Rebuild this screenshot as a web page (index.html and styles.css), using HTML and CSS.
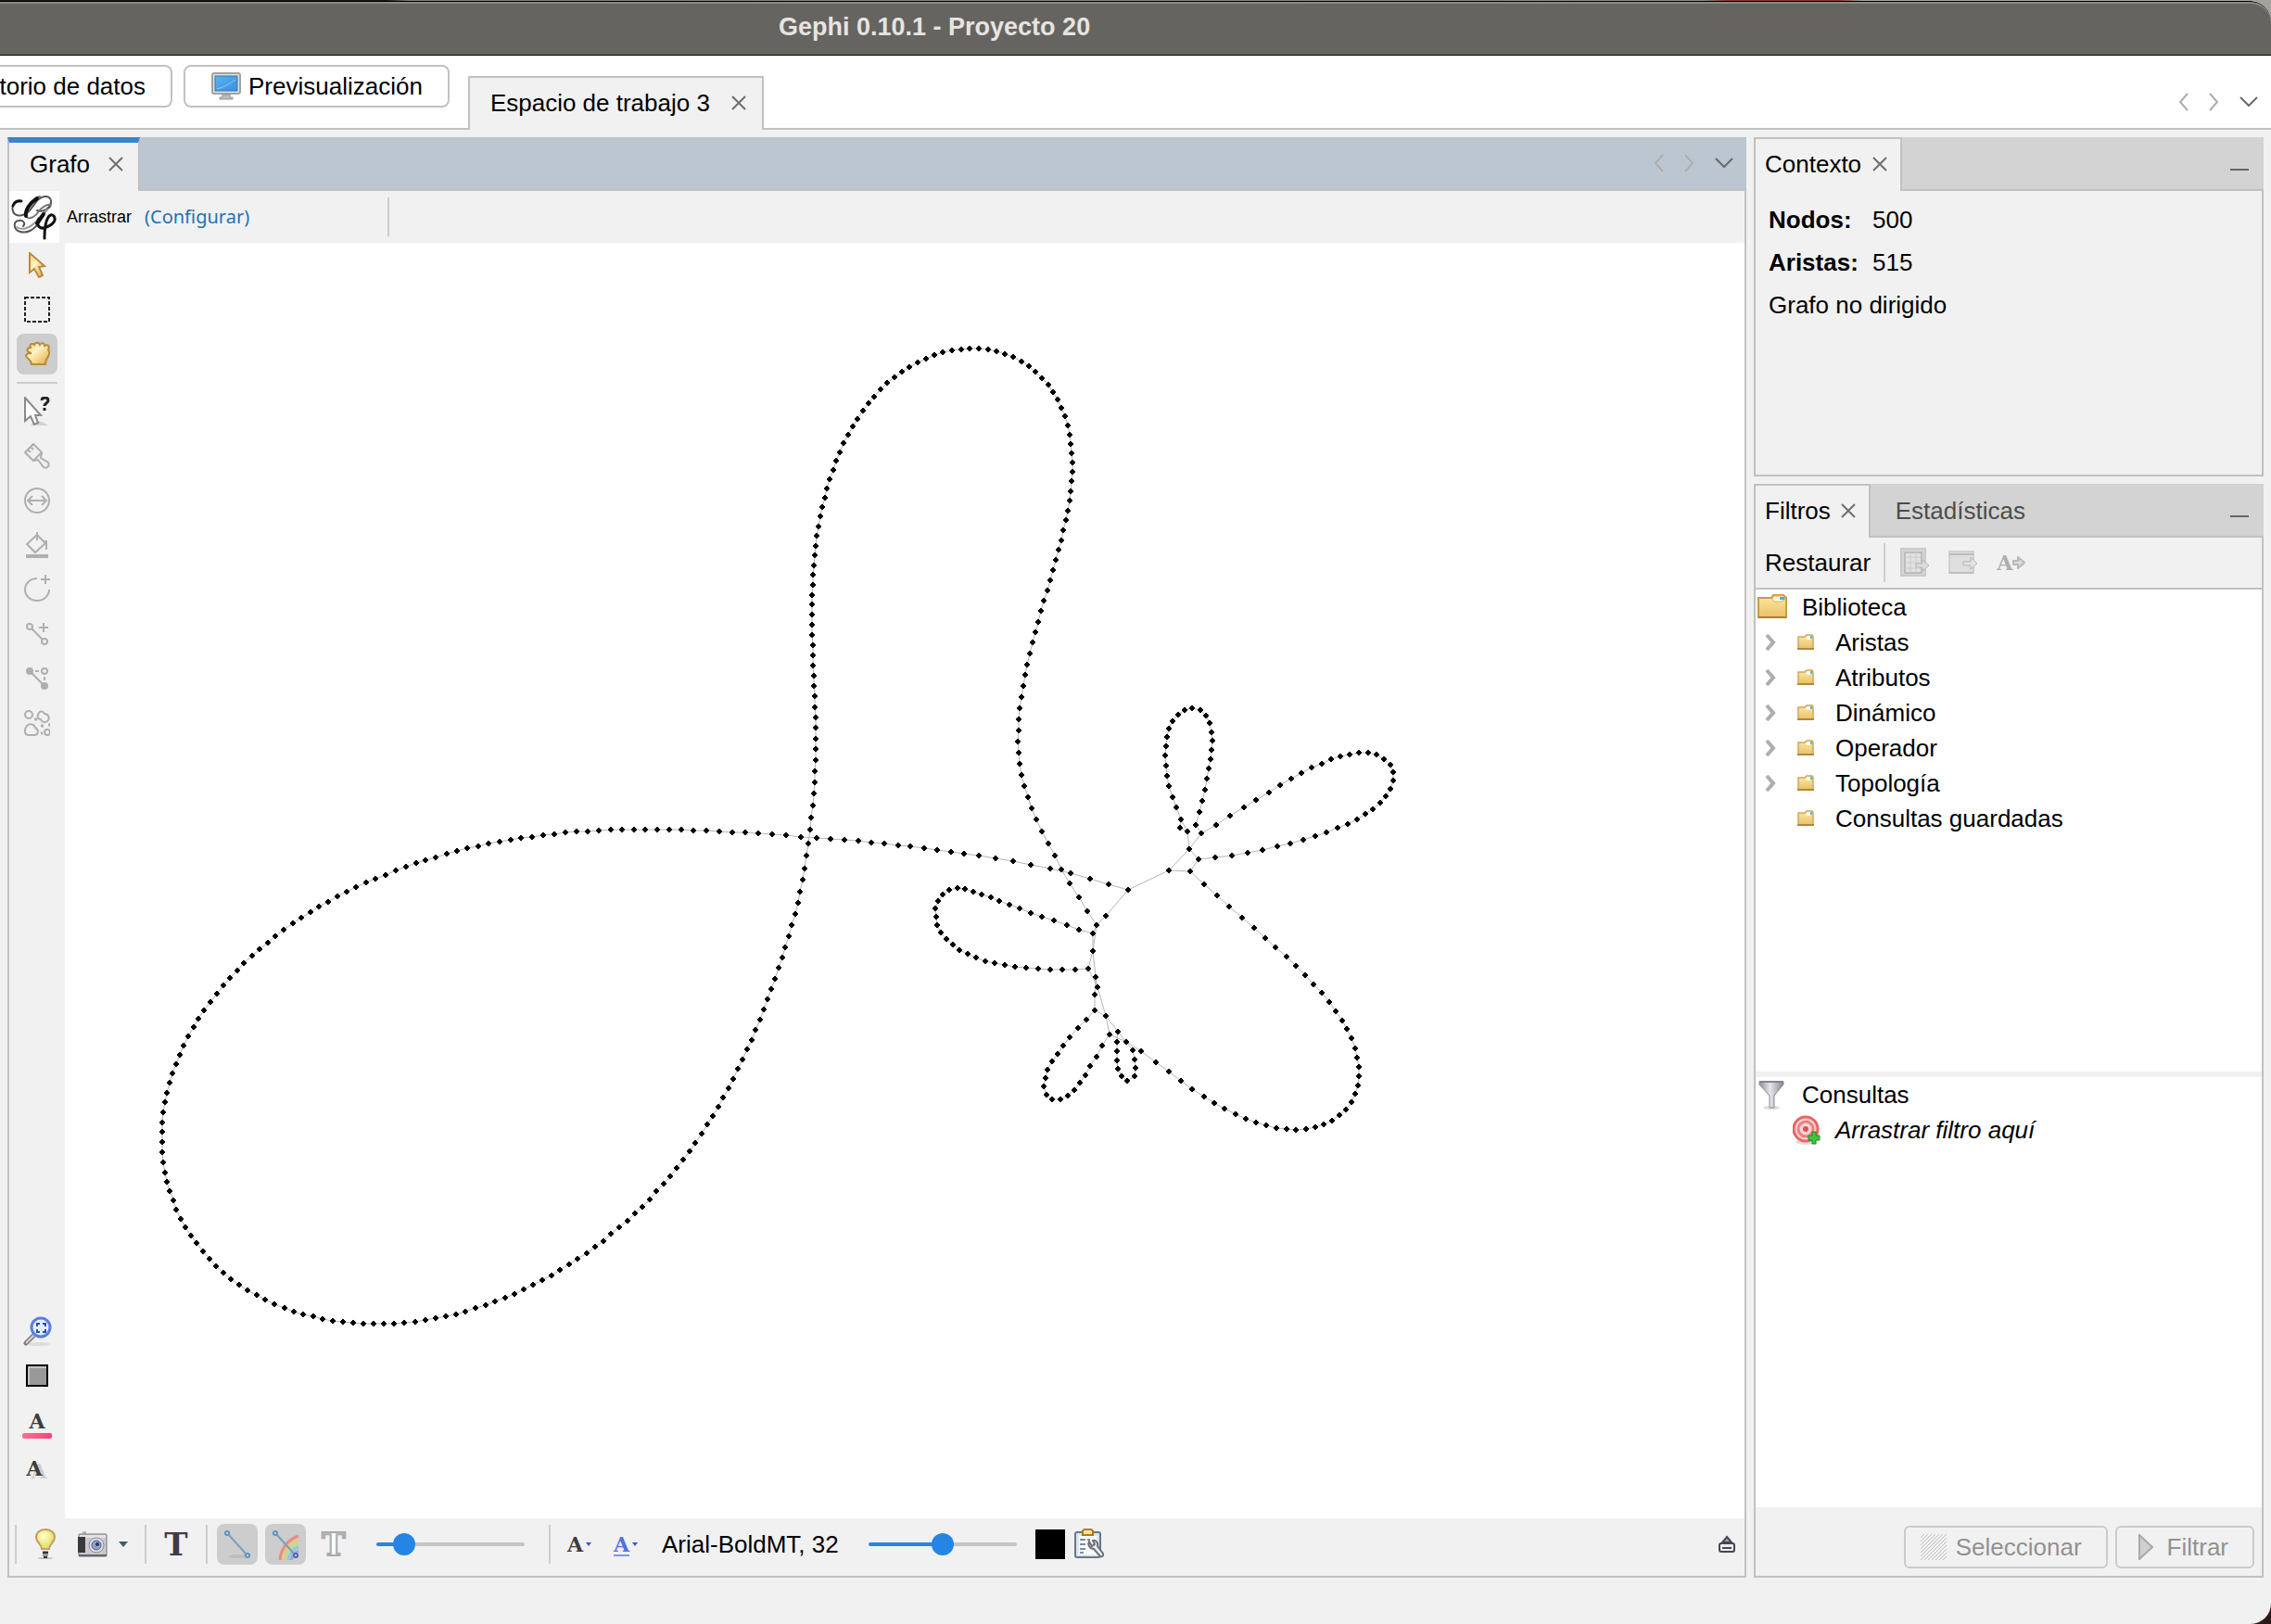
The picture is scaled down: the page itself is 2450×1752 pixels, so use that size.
FILE: index.html
```html
<!DOCTYPE html>
<html lang="es">
<head>
<meta charset="utf-8">
<title>Gephi 0.10.1 - Proyecto 20</title>
<link rel="stylesheet" href="styles.css">
</head>
<body>
<svg class="defs" aria-hidden="true">
  <defs>
    <linearGradient id="gold" x1="0" y1="0" x2="1" y2="1"><stop offset="0" stop-color="#f3d27a"/><stop offset="0.4" stop-color="#fff3c4"/><stop offset="1" stop-color="#e0a93c"/></linearGradient>
    <linearGradient id="folder" x1="0" y1="0" x2="0" y2="1"><stop offset="0" stop-color="#fdeaa5"/><stop offset="1" stop-color="#e9c069"/></linearGradient>
    <linearGradient id="screen" x1="0" y1="0" x2="1" y2="1"><stop offset="0" stop-color="#5cb3ee"/><stop offset="1" stop-color="#3a8ede"/></linearGradient>
    <linearGradient id="metal" x1="0" y1="0" x2="1" y2="0"><stop offset="0" stop-color="#8d8d96"/><stop offset="0.45" stop-color="#e6e6ec"/><stop offset="1" stop-color="#84848e"/></linearGradient>
    <radialGradient id="glow" cx="0.4" cy="0.35" r="0.7"><stop offset="0" stop-color="#ffffd0"/><stop offset="1" stop-color="#dcdc4e"/></radialGradient>
    <pattern id="hatch" width="4" height="4" patternUnits="userSpaceOnUse"><path d="M-1 5L5 -1M-1 1L1 -1M3 5L5 3" stroke="#c0c0c0" stroke-width="1"/></pattern>
    <symbol id="close" viewBox="0 0 16 16"><path d="M1 1L15 15M15 1L1 15" fill="none" stroke="#6e6e6e" stroke-width="2"/></symbol>
    <symbol id="prev" viewBox="0 0 12 20"><path d="M10 1L2 10L10 19" fill="none" stroke="#adadad" stroke-width="2"/></symbol>
    <symbol id="next" viewBox="0 0 12 20"><path d="M2 1L10 10L2 19" fill="none" stroke="#adadad" stroke-width="2"/></symbol>
    <symbol id="down" viewBox="0 0 20 12"><path d="M1 1L10 10L19 1" fill="none" stroke="#6a6a6a" stroke-width="2"/></symbol>
    <symbol id="twist" viewBox="0 0 12 18"><path d="M2 1L9 9L2 17" fill="none" stroke="#aeaeae" stroke-width="4"/></symbol>
    <symbol id="dir" viewBox="0 0 32 28">
      <path d="M1 4h14l2-3h11l3 3v21H1z" fill="url(#folder)" stroke="#c99b4a" stroke-width="2"/>
      <path d="M16 5l2-3h10l2 3-4 3h-8z" fill="#fff8e0" stroke="#dcb768"/><path d="M24 3h5v3h-5z" fill="#35b8ea"/>
      <path d="M1 25h30" stroke="#ab7f33" stroke-width="2"/>
    </symbol>
    <symbol id="dir-s" viewBox="0 0 20 18">
      <path d="M2 3h7l2-2h6l1 2v13H2z" fill="url(#folder)" stroke="#d1a659" stroke-width="1.5"/>
      <path d="M10 4l2-2h5v2l-2 2h-4z" fill="#fff8e0"/><path d="M15 2h2v3h-2z" fill="#4cbfe8"/>
      <path d="M1 16h18" stroke="#b48638" stroke-width="2"/>
    </symbol>
  </defs>
</svg>

<div class="window">
  <header class="titlebar"><h1 class="titlebar-text">Gephi 0.10.1 - Proyecto 20</h1></header>

  <nav class="mainbar" aria-label="Vistas">
    <button class="view-btn view-btn-cut" type="button">Laboratorio de datos</button>
    <button class="view-btn" type="button">
      <svg width="32" height="30" viewBox="0 0 32 30"><rect x="1" y="1" width="30" height="22" rx="2" fill="#e2e2dd" stroke="#a3a39c" stroke-width="2"/><rect x="4" y="4" width="24" height="16" fill="url(#screen)" stroke="#2b74c4"/><path d="M6 18C14 16 20 12 26 8" stroke="#87caf5" fill="none"/><path d="M12 24h8v3h3v2H9v-2h3z" fill="#bdbdb8" stroke="#989890"/></svg>
      Previsualización
    </button>
    <div class="work-tab"><span>Espacio de trabajo 3</span><button class="icon-btn" type="button" aria-label="Cerrar"><svg width="18" height="16"><use href="#close"/></svg></button></div>
    <div class="scrollers">
      <button class="icon-btn" type="button" aria-label="Anterior"><svg width="12" height="20"><use href="#prev"/></svg></button>
      <button class="icon-btn" type="button" aria-label="Siguiente"><svg width="12" height="20"><use href="#next"/></svg></button>
      <button class="icon-btn" type="button" aria-label="Lista"><svg width="20" height="12"><use href="#down"/></svg></button>
    </div>
  </nav>

  <main class="work">
    <section class="panel graph">
      <div class="strip strip-active">
        <div class="tab tab-active"><span>Grafo</span><button class="icon-btn" type="button" aria-label="Cerrar"><svg width="16" height="16"><use href="#close"/></svg></button></div>
        <div class="scrollers scrollers-graph">
          <button class="icon-btn" type="button" aria-label="Anterior"><svg width="12" height="20"><use href="#prev"/></svg></button>
          <button class="icon-btn" type="button" aria-label="Siguiente"><svg width="12" height="20"><use href="#next"/></svg></button>
          <button class="icon-btn" type="button" aria-label="Lista"><svg width="20" height="12"><use href="#down"/></svg></button>
        </div>
      </div>

      <div class="props">
        <svg class="logo" width="54" height="56" viewBox="0 0 54 56" fill="none" stroke-linecap="round">
          <path d="M13 11C6 10 2 16 4 22C7 29 16 27 21 22C27 16 30 7 38 6C45 5 47 12 43 17C40 21 34 23 30 21" stroke="#555" stroke-width="2"/>
          <path d="M13 11C9 10 5 12 4 16" stroke="#111" stroke-width="3"/>
          <path d="M33 6C25 8 17 19 18 26C19 32 27 29 31 23C35 18 40 14 45 15" stroke="#777" stroke-width="2"/>
          <path d="M30 8C22 13 17 21 18 27" stroke="#111" stroke-width="4"/>
          <path d="M44 17C39 20 36 28 32 34C27 42 19 46 12 44C4 42 4 33 10 32C15 31 18 35 15 38" stroke="#555" stroke-width="2"/>
          <path d="M8 39C14 43 22 40 28 34C32 29 36 24 41 20" stroke="#999" stroke-width="2"/>
          <path d="M37 25L30 35" stroke="#111" stroke-width="4"/>
          <path d="M32 30C28 38 34 42 40 39C48 36 51 31 48 27C44 23 38 29 38 51" stroke="#111" stroke-width="3"/>
        </svg>
        <span class="props-mode">Arrastrar</span>
        <a class="props-link" href="#configurar">(Configurar)</a>
        <span class="vsep props-sep"></span>
      </div>

      <div class="stage">
        <div class="tools">
          <button class="tool" type="button" aria-label="Seleccionar"><svg width="28" height="28" viewBox="0 0 28 28"><path d="M6 1V22L11 18L16 27L20 25L16 16L22 15Z" fill="url(#gold)" stroke="#b98a41" stroke-width="2"/></svg></button>
          <button class="tool" type="button" aria-label="Rectángulo"><svg width="28" height="28" viewBox="0 0 28 28"><rect x="1" y="1" width="26" height="26" fill="none" stroke="#222" stroke-width="2" stroke-dasharray="4 2"/></svg></button>
          <button class="tool tool-on" type="button" aria-label="Arrastrar"><svg width="28" height="28" viewBox="0 0 28 28"><path d="M8 25C8 20 3 19 2 16C2 13 5 13 8 13C2 12 2 7 7 7C5 3 9 2 11 4C12 1 16 1 17 4C19 1 22 2 22 5C26 3 28 6 26 9C28 12 27 16 25 18C24 20 23 22 23 25Z" fill="url(#gold)" stroke="#b98a3c" stroke-width="2"/></svg></button>
          <span class="hsep"></span>
          <button class="tool" type="button" aria-label="Información"><svg width="28" height="32" viewBox="0 0 28 32"><path d="M7 31C12 24 20 26 26 31Z" fill="#d2d2d2"/><path d="M1 1V26L7 21L11 30L15 28L12 20H18Z" fill="#fff" stroke="#8a8a8a" stroke-width="2"/><path d="M19 4C19 0 26 0 26 4C26 7 22 7 22 10M22 12V15" fill="none" stroke="#222" stroke-width="3"/></svg></button>
          <button class="tool" type="button" aria-label="Pintor"><svg class="line" width="28" height="28" viewBox="0 0 28 28"><path d="M1 10L10 1L19 10L10 19ZM4 7L7 10M7 4L10 7M10 19L15 18L21 26C24 28 28 25 26 21L18 16L19 10"/></svg></button>
          <button class="tool" type="button" aria-label="Tamaño"><svg class="line" width="28" height="28" viewBox="0 0 28 28"><circle cx="14" cy="14" r="13"/><path d="M4 14H24M9 9L4 14L9 19M19 9L24 14L19 19"/></svg></button>
          <button class="tool" type="button" aria-label="Brocha"><svg class="line" width="28" height="28" viewBox="0 0 28 28"><path d="M14 0V9M14 3L23 12L12 22L3 13ZM20 10H24V19"/><path d="M2 26H26" stroke-width="4"/></svg></button>
          <button class="tool" type="button" aria-label="Nodo"><svg class="line" width="28" height="32" viewBox="0 0 28 32"><path d="M14 4A13 12 0 1 0 27 16M23 0V10M18 5H28"/></svg></button>
          <button class="tool" type="button" aria-label="Arista"><svg class="line" width="28" height="26" viewBox="0 0 28 26"><circle cx="6" cy="5" r="3"/><circle cx="22" cy="21" r="3"/><path d="M8 7L20 19M21 1V11M16 6H26"/></svg></button>
          <button class="tool" type="button" aria-label="Camino más corto"><svg class="line" width="28" height="26" viewBox="0 0 28 26"><circle cx="6" cy="5" r="3" fill="#afafaf"/><circle cx="22" cy="21" r="3" fill="#afafaf"/><circle cx="22" cy="5" r="3"/><path d="M8 7L20 19M12 5H16M22 11V15"/></svg></button>
          <button class="tool" type="button" aria-label="Mapa de calor"><svg class="line" width="28" height="28" viewBox="0 0 28 28"><circle cx="5" cy="5" r="4"/><path d="M16 3C18 0 21 2 22 4C27 4 28 10 25 12C22 14 19 13 18 10C14 10 14 6 16 3ZM3 17C6 14 11 15 12 19C16 21 16 27 11 27H4C0 26 0 21 3 17Z"/><circle cx="25" cy="24" r="3"/><path d="M11 10H14M18 17H21M18 25H20M26 16H28" stroke-width="3"/></svg></button>
          <div class="tools-end">
            <button class="tool" type="button" aria-label="Centrar"><svg width="32" height="32" viewBox="0 0 32 32"><ellipse cx="18" cy="30" rx="12" ry="2" fill="#ddd"/><path d="M14 19L4 29" stroke="#7d7d80" stroke-width="5" stroke-linecap="round"/><path d="M13 20L4 29" stroke="#d4d4d8" stroke-width="2"/><circle cx="20" cy="12" r="10" fill="#e5eeff" stroke="#5a7fe0" stroke-width="3"/><path d="M16 11V8H19M22 8H25V11M25 14V17H22M19 17H16V14" fill="none" stroke="#2b4da8" stroke-width="2"/></svg></button>
            <button class="tool" type="button" aria-label="Color de fondo"><svg width="24" height="24" viewBox="0 0 24 24"><rect x="1" y="1" width="22" height="22" fill="#999" stroke="#000" stroke-width="2"/><path d="M3 22V3H22" fill="none" stroke="#eee"/></svg></button>
            <button class="tool tool-label" type="button" aria-label="Color de etiqueta"><span class="glyph">A</span><span class="underline"></span></button>
            <button class="tool tool-shadow" type="button" aria-label="Visibilidad de etiquetas"><span class="glyph glyph-shade">A</span></button>
          </div>
        </div>
        <svg class="canvas" id="graph" viewBox="70 262 1812 1376" preserveAspectRatio="xMinYMin meet" role="img" aria-label="Grafo"></svg>
      </div>

      <div class="botbar">
        <span class="vsep"></span>
        <button class="bot bot-bulb" type="button" aria-label="Luz"><svg width="22" height="34" viewBox="0 0 22 34"><ellipse cx="11" cy="32" rx="8" ry="1" fill="#bbb"/><path d="M7 22C7 17 1 15 1 9C1 4 6 1 11 1C16 1 21 4 21 9C21 15 15 17 15 22Z" fill="url(#glow)" stroke="#c99c63" stroke-width="2"/><path d="M8 24H14V30H8Z" fill="#999"/><path d="M8 26H14M9 31H13" stroke="#333" stroke-width="2"/></svg></button>
        <button class="bot bot-cam" type="button" aria-label="Captura">
          <svg width="32" height="28" viewBox="0 0 32 28"><path d="M5 0H9V4H5Z" fill="#bbb"/><rect x="1" y="3" width="30" height="24" rx="1" fill="#c9c9d0" stroke="#77777d"/><path d="M2 4H30V7H2Z" fill="#e4e4e6"/><rect x="0" y="6" width="8" height="17" fill="#38383d"/><circle cx="20" cy="15" r="8" fill="#dedee4" stroke="#8c8c94"/><circle cx="20" cy="15" r="5" fill="#8ea2d8" stroke="#5a5d68"/><circle cx="21" cy="14" r="2" fill="#24366f"/><path d="M1 26H31" stroke="#666" stroke-width="2"/></svg>
          <svg width="10" height="8" viewBox="0 0 10 8"><path d="M0 1H10L5 7Z" fill="#4a5866"/></svg>
        </button>
        <span class="vsep"></span>
        <button class="bot bot-t" type="button" aria-label="Etiquetas de nodo"><span class="tee">T</span></button>
        <span class="vsep"></span>
        <div class="toggles">
          <button class="bot toggle" type="button" aria-label="Mostrar aristas"><svg width="32" height="36" viewBox="0 0 32 36"><ellipse cx="17" cy="31" rx="11" ry="2" fill="#bdbdbd"/><path d="M6 7L25 28" stroke="#7b9dbd" stroke-width="2"/><circle cx="5" cy="6" r="2" fill="#dbe9f5" stroke="#5e92c0" stroke-width="2"/><circle cx="27" cy="30" r="2" fill="#dbe9f5" stroke="#5e92c0" stroke-width="2"/></svg></button>
          <button class="bot toggle" type="button" aria-label="Color de aristas"><svg width="32" height="36" viewBox="0 0 32 36"><g fill="none" stroke-width="3" opacity=".75"><path d="M10 35C11 23 18 13 30 9" stroke="#ee7777"/><path d="M13 35C14 25 20 17 30 13" stroke="#f3c66e"/><path d="M16 35C17 27 22 20 30 17" stroke="#b5e08a"/><path d="M19 35C20 29 24 23 30 21" stroke="#77c9e0"/><path d="M22 35C23 31 26 27 30 25" stroke="#a58fd4"/></g><path d="M6 7L25 28" stroke="#7b9dbd" stroke-width="2"/><circle cx="5" cy="6" r="2" fill="#dbe9f5" stroke="#5e92c0" stroke-width="2"/><circle cx="27" cy="30" r="2" fill="#dbe9f5" stroke="#4c62b5" stroke-width="2"/></svg></button>
          <button class="bot bot-t2" type="button" aria-label="Etiquetas de arista"><span class="tee tee-off">T</span></button>
        </div>
        <input class="slider slider-edge" type="range" min="0" max="100" value="13" style="--fill:19%" aria-label="Grosor de aristas">
        <span class="vsep"></span>
        <button class="bot bot-a" type="button" aria-label="Modo de tamaño"><span class="glyph">A</span><svg width="6" height="4" viewBox="0 0 6 4"><path d="M0 0H6L3 4Z" fill="#3c55c4"/></svg></button>
        <button class="bot bot-a" type="button" aria-label="Modo de color"><span class="glyph glyph-blue">A</span><svg width="6" height="4" viewBox="0 0 6 4"><path d="M0 0H6L3 4Z" fill="#3c55c4"/></svg></button>
        <button class="bot bot-font" type="button">Arial-BoldMT, 32</button>
        <input class="slider slider-font" type="range" min="0" max="100" value="50" style="--fill:50%" aria-label="Tamaño de fuente">
        <button class="bot swatch" type="button" aria-label="Color de texto"></button>
        <button class="bot" type="button" aria-label="Atributos"><svg width="32" height="34" viewBox="0 0 32 34"><rect x="1" y="4" width="27" height="27" rx="2" fill="#dfe6ee" stroke="#66788a" stroke-width="2"/><path d="M5 8H24V28H5Z" fill="#fbfcfd"/><path d="M6 12H12M14 12H17M6 17H12M6 22H12M6 26H10" stroke="#7d8ea0" stroke-width="2"/><path d="M9 7V3C9 0 20 0 20 3V7Z" fill="#f8e2b0" stroke="#b0770f" stroke-width="2"/><path d="M16 14C14 18 17 22 21 22L28 30C30 31 32 29 31 27L25 19C26 15 23 12 20 13L22 17L19 19Z" fill="#eceff3" stroke="#6b7078" stroke-width="2"/></svg></button>
        <button class="bot eject" type="button" aria-label="Expandir"><svg width="18" height="20" viewBox="0 0 18 20"><path d="M9 2L14 8H4Z" fill="#9fa2a8" stroke="#44474e" stroke-width="2"/><rect x="1" y="9" width="16" height="9" rx="2" fill="#eee" stroke="#44474e" stroke-width="2"/><path d="M4 14H14" stroke="#44474e" stroke-width="2"/></svg></button>
      </div>
    </section>

    <aside class="side">
      <section class="panel context">
        <div class="strip">
          <div class="tab"><span>Contexto</span><button class="icon-btn" type="button" aria-label="Cerrar"><svg width="16" height="16"><use href="#close"/></svg></button></div>
          <button class="icon-btn minimize" type="button" aria-label="Minimizar"></button>
        </div>
        <dl class="stats">
          <dt>Nodos:</dt><dd>500</dd>
          <dt>Aristas:</dt><dd>515</dd>
        </dl>
        <p class="kind">Grafo no dirigido</p>
      </section>

      <section class="panel filters">
        <div class="strip">
          <div class="tab tab-short"><span>Filtros</span><button class="icon-btn" type="button" aria-label="Cerrar"><svg width="16" height="16"><use href="#close"/></svg></button></div>
          <button class="tab-idle" type="button">Estadísticas</button>
          <button class="icon-btn minimize" type="button" aria-label="Minimizar"></button>
        </div>
        <div class="filterbar">
          <button class="reset" type="button">Restaurar</button>
          <span class="vsep"></span>
          <button class="icon-btn" type="button" disabled aria-label="Exportar columna"><svg width="32" height="32" viewBox="0 0 32 32"><rect x="1" y="1" width="26" height="29" fill="#d6d6d6" stroke="#cacaca" stroke-width="2"/><path d="M5 5H23V27H5Z" fill="#e2e2e2" stroke="#bcbcbc" stroke-width="2"/><path d="M11 5V27M17 5V27M5 10H23M5 16H23M5 22H23" stroke="#cacaca" stroke-width="1"/><path d="M17 17H24V13L31 19L24 25V21H17Z" fill="#ddd" stroke="#b9b9b9"/></svg></button>
          <button class="icon-btn" type="button" disabled aria-label="Exportar espacio"><svg width="32" height="32" viewBox="0 0 32 32"><rect x="1" y="4" width="26" height="23" fill="#dedede" stroke="#d0d0d0" stroke-width="2"/><path d="M1 7H27M1 27H27" stroke="#bebebe" stroke-width="2"/><path d="M16 15H24V10L31 17L24 23V19H16Z" fill="#e3e3e3" stroke="#b6b6b6"/></svg></button>
          <button class="icon-btn export-label" type="button" disabled aria-label="Exportar etiquetas"><span class="glyph glyph-off">A</span><svg width="14" height="14" viewBox="0 0 14 14"><path d="M1 5H6V1L13 7L6 13V9H1Z" fill="#ddd" stroke="#b9b9b9" stroke-width="2"/></svg></button>
        </div>
        <div class="tree tree-library">
          <div class="row row-root"><svg width="32" height="28"><use href="#dir"/></svg>Biblioteca</div>
          <ul class="list">
            <li class="row"><svg class="twist" width="12" height="18"><use href="#twist"/></svg><svg width="20" height="18"><use href="#dir-s"/></svg>Aristas</li>
            <li class="row"><svg class="twist" width="12" height="18"><use href="#twist"/></svg><svg width="20" height="18"><use href="#dir-s"/></svg>Atributos</li>
            <li class="row"><svg class="twist" width="12" height="18"><use href="#twist"/></svg><svg width="20" height="18"><use href="#dir-s"/></svg>Dinámico</li>
            <li class="row"><svg class="twist" width="12" height="18"><use href="#twist"/></svg><svg width="20" height="18"><use href="#dir-s"/></svg>Operador</li>
            <li class="row"><svg class="twist" width="12" height="18"><use href="#twist"/></svg><svg width="20" height="18"><use href="#dir-s"/></svg>Topología</li>
            <li class="row"><span class="twist"></span><svg width="20" height="18"><use href="#dir-s"/></svg>Consultas guardadas</li>
          </ul>
        </div>
        <div class="tree tree-queries">
          <div class="row row-root"><svg width="32" height="32" viewBox="0 0 32 32"><ellipse cx="15" cy="30" rx="9" ry="2" fill="#ddd"/><path d="M2 2H28V5L18 17V30H13V17L2 5Z" fill="url(#metal)" stroke="#8c8c95"/><path d="M2 2H28" stroke="#85858e" stroke-width="2"/></svg>Consultas</div>
          <div class="row row-drop"><svg width="32" height="32" viewBox="0 0 32 32"><ellipse cx="14" cy="29" rx="11" ry="3" fill="#ddd"/><circle cx="14" cy="15" r="13" fill="#f9d5d5" stroke="#e86464" stroke-width="3"/><circle cx="14" cy="15" r="8" fill="none" stroke="#ee7f7f" stroke-width="3"/><circle cx="14" cy="15" r="3" fill="#e35050"/><path d="M21 18H25V22H29V27H25V31H21V27H17V22H21Z" fill="#3cc83c" stroke="#1d8a26"/></svg><em>Arrastrar filtro aquí</em></div>
        </div>
        <div class="actions">
          <button class="act act-select" type="button" disabled><svg width="28" height="28" viewBox="0 0 28 28"><rect width="28" height="28" fill="url(#hatch)"/></svg>Seleccionar</button>
          <button class="act act-run" type="button" disabled><svg width="18" height="28" viewBox="0 0 18 28"><path d="M2 1L16 14L2 27Z" fill="#cfcfcf" stroke="#a9a9a9" stroke-width="2"/></svg>Filtrar</button>
        </div>
      </section>
    </aside>
  </main>
</div>
<script src="graph.js"></script>
</body>
</html>
```
FILE: styles.css
```css
* { box-sizing: border-box; }

body {
  margin: 0;
  min-height: 100vh;
  display: flex;
  flex-direction: column;
  padding-top: 1px;
  background: linear-gradient(90deg, #1a1710 17%, #7d7d76 18%, #8a8a84 75%, #8a3a2c 76%, #8a3a2c 81%, #a3a39c 82%) top / 100% 40px no-repeat, #2a1a18;
  font: 26px/30px "Liberation Sans", Arial, sans-serif;
  color: #000;
}

button {
  font: inherit;
  color: inherit;
  margin: 0;
  padding: 0;
  border: 0;
  background: none;
}

svg { display: block; flex: none; }
h1, p, dl, dd, ul { margin: 0; padding: 0; }

.defs { position: absolute; width: 0; height: 0; }

.window {
  flex: 1;
  display: flex;
  flex-direction: column;
  overflow: hidden;
  border-radius: 0 22px 22px 0;
  background: #f1f1f1;
}

.titlebar {
  height: 59px;
  flex: none;
  display: flex;
  align-items: center;
  padding: 0 0 4px 840px;
  background: #666460;
  border-top: 1px solid #000;
  border-bottom: 1px solid #000;
  border-radius: 0 22px 0 0;
  box-shadow: inset 0 2px 0 #8c8a87;
}
.titlebar-text { font-size: 27px; line-height: 30px; color: #e6e4e1; white-space: nowrap; }

.mainbar {
  height: 80px;
  flex: none;
  display: flex;
  align-items: flex-start;
  gap: 12px;
  padding-top: 10px;
  background: linear-gradient(#c1c1c1, #c1c1c1) bottom / 100% 2px no-repeat, #fff;
  white-space: nowrap;
}
.view-btn {
  height: 46px;
  display: flex;
  align-items: center;
  gap: 8px;
  padding: 0 27px 0 28px;
  border: 2px solid #c2c2c2;
  border-radius: 8px;
  background: #fff;
}
.view-btn-cut { width: 186px; flex: none; justify-content: flex-end; border-left: 0; border-radius: 0 8px 8px 0; overflow: hidden; }
.work-tab {
  height: 58px;
  display: flex;
  align-items: center;
  gap: 22px;
  margin: 12px 0 0 8px;
  padding: 0 16px 2px 22px;
  border: 2px solid #c1c1c1;
  border-bottom: 0;
  background: #f1f1f1;
}
.scrollers { display: flex; align-items: center; gap: 20px; height: 80px; margin-left: auto; padding-right: 14px; }
.scrollers-graph { height: 56px; }
.scrollers > :last-child { margin-left: 2px; }

.work {
  flex: 1;
  display: grid;
  grid-template-columns: minmax(0, 1fr) 550px;
  gap: 8px;
  padding: 8px 8px 50px;
}
.panel { display: flex; flex-direction: column; border: 2px solid #c1c1c1; border-top: 0; }
.side { display: grid; grid-template-rows: 366px 1fr; gap: 8px; }

.strip {
  height: 58px;
  flex: none;
  display: flex;
  margin: 0 -2px;
  background: linear-gradient(#c1c1c1, #c1c1c1) bottom / 100% 2px no-repeat, #d3d3d3;
}
.strip-active { background: linear-gradient(#c1c1c1, #c1c1c1) bottom / 100% 2px no-repeat, #bcc6d0; }
.tab {
  display: flex;
  align-items: center;
  gap: 12px;
  padding: 0 14px 2px 10px;
  border: 2px solid #c1c1c1;
  border-bottom: 0;
  background: #f1f1f1;
}
.tab-short { gap: 11px; }
.tab-active { gap: 20px; padding: 0 16px 6px 22px; border-top: 6px solid #3c83c8; }
.tab-idle { padding: 0 27px; color: #4c4c4c; }
.minimize { width: 20px; height: 2px; margin: 34px 16px 0 auto; background: #666; }

.props { height: 56px; flex: none; display: flex; align-items: center; font-size: 18px; line-height: 24px; }
.logo { background: #fff; }
.props-mode { margin: 0 14px 0 8px; }
.props-link { width: 262px; font: 20px/24px "Noto Sans", sans-serif; color: #2470b3; text-decoration: none; }
.vsep { width: 2px; height: 42px; flex: none; background: #cdcdcd; }

.stage { flex: 1; display: flex; min-height: 0; }
.tools {
  width: 60px;
  flex: none;
  display: flex;
  flex-direction: column;
  align-items: center;
  gap: 4px;
  padding: 2px 0 32px;
}
.tool { width: 44px; height: 44px; flex: none; display: grid; place-items: center; border-radius: 8px; }
.tool-on { background: #cdcdcd; }
.hsep { width: 44px; height: 2px; margin: 4px 0; background: #cdcdcd; }
.line { fill: none; stroke: #afafaf; stroke-width: 2; }
.tools-end { display: flex; flex-direction: column; gap: 4px; margin-top: auto; }
.tool-label { margin-top: 4px; align-content: center; }
.underline { width: 32px; height: 6px; border-radius: 2px; background: linear-gradient(90deg, #ff6d9b, #ff4273); }
.canvas { flex: 1; min-width: 0; background: #fff; }
.node { fill: #000; stroke: #000; stroke-width: 1; stroke-linejoin: round; }
.edge { fill: none; stroke: #b4b4b4; stroke-width: 1; }

.glyph { font: bold 22px/26px "DejaVu Serif", serif; color: #3c3c3c; }
.glyph-shade { text-shadow: 5px 3px 0 #cfcfcf; }
.tool-shadow { padding-right: 6px; }
.glyph-blue { color: #5372d8; box-shadow: inset 0 -2px 0 #7d97e6; }
.glyph-off { color: #adadad; }
.tee { font: bold 34px/40px "DejaVu Serif", serif; color: #3d3d44; }
.tee-off { color: #fff; -webkit-text-stroke: 2px #ababab; }

.botbar { height: 62px; flex: none; display: flex; align-items: center; padding: 0 10px 6px 6px; white-space: nowrap; }
.bot { display: flex; align-items: center; flex: none; }
.bot-bulb { margin: 0 24px 0 20px; }
.bot-cam { gap: 12px; margin-right: 18px; }
.bot-t { width: 64px; justify-content: center; }
.toggles { display: flex; gap: 8px; margin-left: 10px; }
.toggle { width: 44px; height: 44px; justify-content: center; border-radius: 8px; background: #cdcdcd; }
.bot-t2 { width: 44px; height: 44px; justify-content: center; }
.bot-a { width: 50px; gap: 3px; }
.slider-edge { margin: 0 26px 0 24px; }
.botbar .vsep + .bot-a { margin-left: 18px; }
.bot-font { margin: 0 30px 0 2px; }
.slider-font { margin-right: 20px; }

.slider {
  width: 160px;
  height: 24px;
  flex: none;
  appearance: none;
  background: none;
}
.slider::-webkit-slider-runnable-track {
  height: 4px;
  border-radius: 2px;
  background: linear-gradient(90deg, #2485e4 var(--fill), #c4c4c4 var(--fill));
}
.slider::-webkit-slider-thumb {
  appearance: none;
  width: 24px;
  height: 24px;
  margin-top: -10px;
  border-radius: 50%;
  background: #2485e4;
}
.swatch { width: 32px; height: 32px; margin-right: 10px; background: #000; }
.eject { margin-left: auto; }

.stats { display: grid; grid-template-columns: 112px 1fr; row-gap: 16px; padding: 16px 14px; }
.stats dt { font-weight: bold; }
.kind { padding: 0 14px; }

.filterbar { height: 56px; flex: none; display: flex; align-items: center; gap: 20px; padding-left: 10px; border-bottom: 2px solid #c1c1c1; }
.filterbar .vsep { margin: 0 -4px 0 -6px; }
.export-label { display: flex; align-items: center; }
.tree { background: #fff; white-space: nowrap; }
.tree-library { height: 520px; flex: none; }
.tree-queries { flex: 1; margin-top: 6px; }
.list { list-style: none; }
.row { height: 38px; display: flex; align-items: center; gap: 22px; padding-left: 10px; }
.row-root { gap: 16px; padding-left: 2px; }
.row-drop { gap: 14px; padding-left: 40px; }
.twist { width: 12px; }

.actions { height: 74px; flex: none; display: flex; align-items: center; justify-content: flex-end; gap: 8px; padding: 12px 8px 0 0; }
.act { height: 46px; display: flex; align-items: center; gap: 10px; padding: 0 26px 0 16px; border: 2px solid #cbcbcb; border-radius: 6px; color: #919191; }
.act-run { gap: 14px; padding: 0 26px 0 22px; }
```
FILE: graph.js
```js
// Node chains: each has an origin, a grid scale and its nodes as x,y pairs.
const chains = [
  { o: [160, 880], s: [3, 2.8], p: "1534,42 1496,43 1459,44 1422,47 1386,48 1349,51 1313,55 1277,58 1242,63 1206,68 1172,73 1136,79 1101,85 1067,92 1032,99 998,107 965,115 931,125 898,134 866,144 833,154 800,166 768,178 736,190 705,202 673,215 643,229 613,244 583,259 553,275 524,291 496,308 467,326 439,344 412,364 386,383 360,403 335,423 310,445 287,467 264,489 242,513 221,537 201,562 181,587 163,612 146,639 130,665 115,693 102,721 90,749 79,778 69,807 61,837 54,866 49,896 46,926 45,956 44,986 46,1017 49,1047 54,1077 60,1105 69,1134 80,1162 91,1189 105,1217 120,1243 137,1268 156,1292 176,1316 197,1339 220,1360 244,1380 268,1399 295,1416 322,1433 350,1448 379,1462 409,1475 440,1487 471,1497 502,1505 533,1513 565,1520 598,1525 631,1529 664,1532 697,1534 730,1535 763,1535 796,1534 829,1532 863,1528 896,1524 930,1518 962,1512 995,1505 1027,1497 1059,1488 1091,1478 1122,1468 1154,1456 1184,1444 1215,1432 1245,1418 1275,1404 1304,1388 1333,1372 1362,1356 1390,1339 1418,1322 1446,1303 1472,1284 1498,1264 1524,1244 1550,1223" },
  { o: [660, 880], s: [3, 3], p: "50,1311 74,1288 98,1265 122,1241 145,1216 167,1191 189,1166 211,1139 232,1112 251,1085 271,1058 291,1030 309,1000 327,971 345,942 361,912 378,881 394,851 409,820 424,789 438,757 452,726 466,693 480,661 492,628 505,594 517,561 529,528 540,493 551,460 562,425 572,389 583,354 593,318 602,282 610,245 618,208 624,170 630,130 636,91 641,46 646,6" },
  { o: [840, 360], s: [3, 3], p: "106,1566 110,1527 114,1489 116,1453 118,1416 119,1381 120,1345 120,1310 120,1276 119,1242 118,1208 117,1174 115,1140 114,1107 112,1074 111,1041 110,1008 109,975 109,942 108,909 108,877 109,845 110,812 112,780 114,749 117,718 120,686 124,654 129,623 135,592 142,561 149,530 157,500 166,470 176,441 187,412 199,383 211,355 225,328 240,301 256,275 273,250 291,226 310,203 330,181 352,160 375,140 400,123 424,107 449,93 476,80 504,70 532,61 560,54 590,50 619,47 648,48 677,51 705,57 733,65 760,75 785,89 810,105 832,123 853,144 872,165 889,189 904,214 916,241 927,268 935,296 942,326 946,356 949,386 950,417 950,447 948,478 945,510 941,541 935,573 929,604 922,637 914,669 906,700 897,733 887,765 878,797 869,830 859,864 849,898 840,932 830,966 821,1000 812,1034 804,1070 797,1105 791,1140 785,1176 781,1212 778,1248 776,1284 775,1320 778,1357 781,1392 787,1428 795,1465 806,1500 819,1537" },
  { o: [660, 880], s: [3, 3], p: "34,45 71,44 109,44 148,44 187,45 226,46 265,48 306,49 347,51 389,53 431,55 474,58 518,60 563,64 611,68 662,72 709,76 754,79 797,82 841,87 883,90 926,95 967,99 1010,104 1054,110 1097,117 1141,122 1189,129 1242,138 1299,148 1357,160" }
];
const core = [
  "361,360 372,397 387,433 404,472 422,510 442,550 463,593 488,640 514,684 541,728 567,773 597,744 663,661",
  "371,580 428,592 490,607 548,623 606,641 663,661 786,598 847,528 876,562",
  "567,773 557,800 516,788 478,774 439,760 404,747 369,734 336,721 305,708 275,696 248,685 222,675 197,666 172,658 148,655 124,660 103,674 89,695 82,721 83,747 88,774 99,798 115,819 134,838 155,854 179,868 205,880 231,890 261,898 291,904 323,910 355,913 391,915 427,917 464,917 503,917 544,916 570,975",
  "557,800 558,858 544,916",
  "567,773 558,858 565,943 570,975 595,1068 607,1129 659,1152 703,1183",
  "565,943 563,1000 564,1049 595,1068 632,1120 659,1152",
  "564,1049 537,1079 511,1107 488,1136 467,1163 450,1190 434,1216 421,1242 413,1269 410,1296 417,1322 435,1338 459,1339 482,1327 501,1308 517,1285 534,1259 549,1231 567,1199 586,1165 607,1129",
  "632,1120 629,1153 630,1183 631,1211 634,1239 643,1263 662,1278 682,1263 687,1237 683,1210 677,1180 659,1152",
  "703,1183 747,1217 786,1248 823,1277 857,1304 892,1328 924,1350 956,1369 988,1386 1019,1402 1051,1414 1080,1423 1111,1431 1142,1435 1171,1437 1200,1434 1229,1428 1255,1420 1279,1407 1302,1390 1321,1370 1338,1347 1350,1320 1358,1292 1361,1262 1360,1232 1356,1202 1349,1172 1339,1141 1325,1111 1309,1083 1291,1053 1271,1024 1248,994 1224,966 1198,937 1171,907 1141,876 1110,846 1077,815 1043,783 1007,749 969,715 932,679 892,641 851,601 786,598",
  "851,601 876,562 928,555 978,548 1025,539 1070,530 1113,520 1153,509 1192,497 1229,485 1264,473 1296,460 1326,446 1355,431 1381,415 1404,398 1425,379 1443,357 1457,334 1465,307 1465,280 1455,255 1437,236 1413,223 1388,217 1362,216 1334,221 1306,229 1278,238 1248,251 1218,265 1188,282 1156,301 1122,322 1088,345 1051,368 1013,394 972,421 930,449 884,478 847,528",
  "884,478 869,449 879,409 887,371 895,335 902,301 908,268 912,236 915,206 917,177 915,149 910,121 900,97 882,78 858,71 835,77 814,92 799,114 788,139 781,166 777,196 776,226 778,258 782,290 788,324 797,359 809,394 823,433 843,470 847,528",
  "823,433 821,458 843,470"
];
core.forEach(p => chains.push({ o: [980, 740], s: [2.8, 3], p }));

const nodes = [];
let edges = "";
for (const { o, s, p } of chains) {
  p.split(" ").forEach((pair, i) => {
    const [x, y] = pair.split(",").map((v, k) => Math.round(o[k] + v / s[k]));
    edges += (i ? "L" : "M") + x + " " + y;
    // Chains share their end nodes; draw each of those once.
    if (!nodes.some(n => Math.abs(n[0] - x) < 3 && Math.abs(n[1] - y) < 3)) nodes.push([x, y]);
  });
}
const dots = nodes.map(([x, y]) => "M" + (x - 3) + " " + y + "l3 -3l3 3l-3 3z").join("");
document.getElementById("graph").innerHTML =
  '<path class="edge" d="' + edges + '"/><path class="node" d="' + dots + '"/>';
```
